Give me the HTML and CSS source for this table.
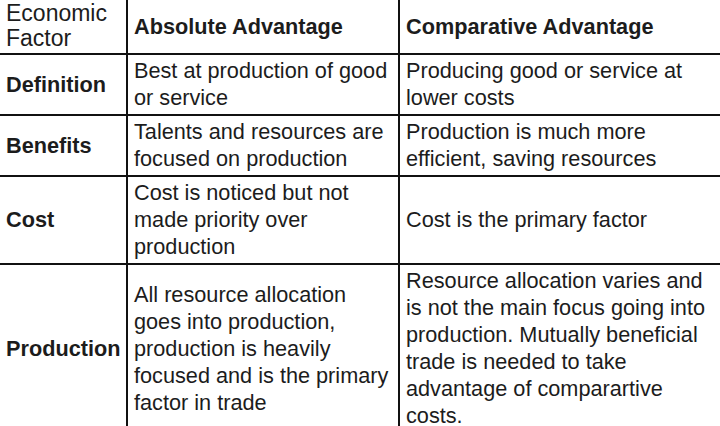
FILE: index.html
```html
<!DOCTYPE html>
<html>
<head>
<meta charset="utf-8">
<link rel="stylesheet" href="styles.css">
</head>
<body>
<table class="grid">
  <colgroup>
    <col class="c1">
    <col class="c2">
    <col class="c3">
  </colgroup>
  <tr class="head">
    <td class="factor">Economic Factor</td>
    <td class="bold">Absolute Advantage</td>
    <td class="bold">Comparative Advantage</td>
  </tr>
  <tr>
    <td class="bold">Definition</td>
    <td>Best at production of good or service</td>
    <td>Producing good or service at lower costs</td>
  </tr>
  <tr>
    <td class="bold">Benefits</td>
    <td>Talents and resources are focused on production</td>
    <td>Production is much more efficient, saving resources</td>
  </tr>
  <tr>
    <td class="bold">Cost</td>
    <td>Cost is noticed but not made priority over production</td>
    <td>Cost is the primary factor</td>
  </tr>
  <tr>
    <td class="bold">Production</td>
    <td>All resource allocation goes into production, production is heavily focused and is the primary factor in trade</td>
    <td>Resource allocation varies and is not the main focus going into production. Mutually beneficial trade is needed to take advantage of comparartive costs.</td>
  </tr>
</table>
</body>
</html>
```

FILE: styles.css
```css
html, body {
  margin: 0;
  padding: 0;
  background: #ffffff;
  overflow: hidden;
}
.grid {
  border-collapse: collapse;
  table-layout: fixed;
  width: 722px;
  margin-left: -2px;
  margin-top: -3px;
  font-family: "Liberation Sans", Arial, sans-serif;
  font-size: 21.7px;
  line-height: 27px;
  color: #1c1c1c;
}
.c1 { width: 128px; }
.c2 { width: 272px; }
.c3 { width: 322px; }
.grid td {
  border: 2px solid #111111;
  padding: 2px 6px 3px 6px;
  vertical-align: middle;
  text-align: left;
}
.grid .head td {
  padding: 2px 6px 2px 6px;
}
.bold {
  font-weight: bold;
}
.grid .factor {
  font-weight: normal;
  font-size: 23px;
  line-height: 25px;
}
```
